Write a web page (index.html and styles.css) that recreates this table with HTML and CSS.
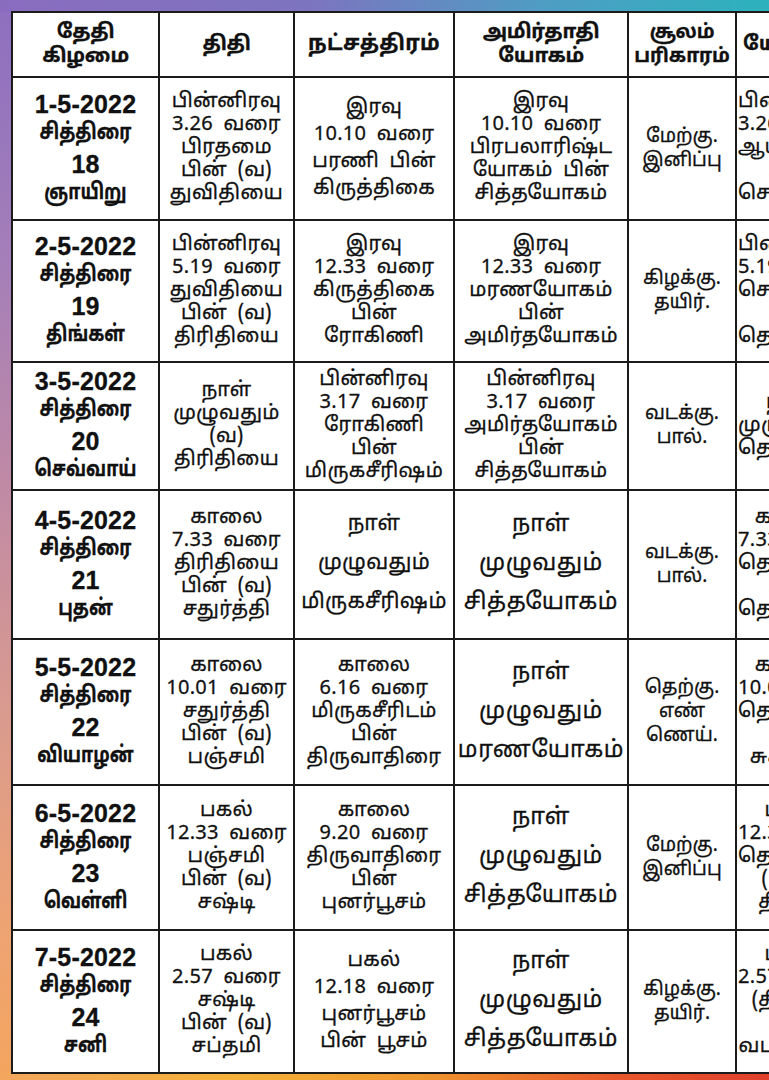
FILE: index.html
```html
<!DOCTYPE html>
<html lang="ta">
<head>
<meta charset="utf-8">
<title>பஞ்சாங்கம்</title>
<link rel="stylesheet" href="styles.css">
</head>
<body>
<div class="frame">
  <table class="cal">
    <colgroup>
      <col class="c1"><col class="c2"><col class="c3"><col class="c4"><col class="c5"><col class="c6">
    </colgroup>
    <thead>
      <tr class="rh">
        <th>தேதி<br>கிழமை</th>
        <th>திதி</th>
        <th class="wide">நட்சத்திரம்</th>
        <th>அமிர்தாதி<br>யோகம்</th>
        <th class="tight">சூலம்<br>பரிகாரம்</th>
        <th class="lead">யோகம்</th>
      </tr>
    </thead>
    <tbody>
      <tr class="r1">
        <td class="date"><span class="d">1-5-2022</span><span class="m">சித்திரை</span><span class="d">18</span><span class="m">ஞாயிறு</span></td>
        <td>பின்னிரவு<br>3.26 வரை<br>பிரதமை<br>பின் (வ)<br>துவிதியை</td>
        <td class="mid">இரவு<br>10.10 வரை<br>பரணி பின்<br>கிருத்திகை</td>
        <td>இரவு<br>10.10 வரை<br>பிரபலாரிஷ்ட<br>யோகம் பின்<br>சித்தயோகம்</td>
        <td class="small">மேற்கு.<br>இனிப்பு</td>
        <td>பின்னிரவு<br>3.26 வரை<br>ஆயுஷ்மான்<br>பின்<br>சௌபாக்கியம்</td>
      </tr>
      <tr class="r2">
        <td class="date"><span class="d">2-5-2022</span><span class="m">சித்திரை</span><span class="d">19</span><span class="m">திங்கள்</span></td>
        <td>பின்னிரவு<br>5.19 வரை<br>துவிதியை<br>பின் (வ)<br>திரிதியை</td>
        <td>இரவு<br>12.33 வரை<br>கிருத்திகை<br>பின்<br>ரோகிணி</td>
        <td>இரவு<br>12.33 வரை<br>மரணயோகம்<br>பின்<br>அமிர்தயோகம்</td>
        <td class="small">கிழக்கு.<br>தயிர்.</td>
        <td>பின்னிரவு<br>5.19 வரை<br>சௌபாக்கியம்<br>பின்<br>தெசோபனம்</td>
      </tr>
      <tr class="r3">
        <td class="date"><span class="d">3-5-2022</span><span class="m">சித்திரை</span><span class="d">20</span><span class="m">செவ்வாய்</span></td>
        <td>நாள்<br>முழுவதும்<br>(வ)<br>திரிதியை</td>
        <td>பின்னிரவு<br>3.17 வரை<br>ரோகிணி<br>பின்<br>மிருகசீரிஷம்</td>
        <td>பின்னிரவு<br>3.17 வரை<br>அமிர்தயோகம்<br>பின்<br>சித்தயோகம்</td>
        <td class="small">வடக்கு.<br>பால்.</td>
        <td>நாள்<br>முழுவதும்<br>தெசோபனம்</td>
      </tr>
      <tr class="r4">
        <td class="date"><span class="d">4-5-2022</span><span class="m">சித்திரை</span><span class="d">21</span><span class="m">புதன்</span></td>
        <td>காலை<br>7.33 வரை<br>திரிதியை<br>பின் (வ)<br>சதுர்த்தி</td>
        <td class="big">நாள்<br>முழுவதும்<br>மிருகசீரிஷம்</td>
        <td class="big big4">நாள்<br>முழுவதும்<br>சித்தயோகம்</td>
        <td class="small">வடக்கு.<br>பால்.</td>
        <td>காலை<br>7.33 வரை<br>தெசோபனம்<br>பின்<br>தெஅதிகண்டம்</td>
      </tr>
      <tr class="r5">
        <td class="date"><span class="d">5-5-2022</span><span class="m">சித்திரை</span><span class="d">22</span><span class="m">வியாழன்</span></td>
        <td>காலை<br>10.01 வரை<br>சதுர்த்தி<br>பின் (வ)<br>பஞ்சமி</td>
        <td>காலை<br>6.16 வரை<br>மிருகசீரிடம்<br>பின்<br>திருவாதிரை</td>
        <td class="big big4">நாள்<br>முழுவதும்<br>மரணயோகம்</td>
        <td class="small">தெற்கு.<br>எண்<br>ணெய்.</td>
        <td>காலை<br>10.01 வரை<br>தெஅதிகண்டம்<br>பின்<br>சுகர்மம்</td>
      </tr>
      <tr class="r6">
        <td class="date"><span class="d">6-5-2022</span><span class="m">சித்திரை</span><span class="d">23</span><span class="m">வெள்ளி</span></td>
        <td>பகல்<br>12.33 வரை<br>பஞ்சமி<br>பின் (வ)<br>சஷ்டி</td>
        <td>காலை<br>9.20 வரை<br>திருவாதிரை<br>பின்<br>புனர்பூசம்</td>
        <td class="big big4">நாள்<br>முழுவதும்<br>சித்தயோகம்</td>
        <td class="small">மேற்கு.<br>இனிப்பு</td>
        <td>பகல்<br>12.33 வரை<br>தெசுகர்மம்<br>(பின்)<br>திருதி</td>
      </tr>
      <tr class="r7">
        <td class="date"><span class="d">7-5-2022</span><span class="m">சித்திரை</span><span class="d">24</span><span class="m">சனி</span></td>
        <td>பகல்<br>2.57 வரை<br>சஷ்டி<br>பின் (வ)<br>சப்தமி</td>
        <td class="mid">பகல்<br>12.18 வரை<br>புனர்பூசம்<br>பின் பூசம்</td>
        <td class="big big4">நாள்<br>முழுவதும்<br>சித்தயோகம்</td>
        <td class="small">கிழக்கு.<br>தயிர்.</td>
        <td>பகல்<br>2.57 வரை<br>(திருதி)<br>பின்<br>வடமேற்கு</td>
      </tr>
    </tbody>
  </table>
</div>
</body>
</html>
```

FILE: styles.css
```css
html, body {
  margin: 0;
  padding: 0;
  overflow: hidden;
  width: 769px;
  height: 1080px;
}

body {
  font-family: "Noto Sans Tamil", "Lohit Tamil", "Liberation Sans", "Noto Sans", sans-serif;
  color: #111;
}

.frame {
  width: 769px;
  height: 1080px;
  box-sizing: border-box;
  padding: 11px 0 0 11px;
  overflow: hidden;
  background: linear-gradient(180deg, #8d6fc0 0%, #a57fb8 25%, #c08aa5 45%, #d89a90 65%, #eea374 85%, #f3a55e 100%);
  position: relative;
}

.frame::before {
  content: "";
  position: absolute;
  left: 0; right: 0; top: 0;
  height: 12px;
  background: linear-gradient(90deg, #8a6cbf 0%, #7d74bf 40%, #4f9cc4 70%, #2cb3bd 100%);
}

.frame::after {
  content: "";
  position: absolute;
  left: 0; right: 0; bottom: 0;
  height: 9px;
  background: linear-gradient(90deg, #f2a65e 0%, #f4b23a 30%, #f0962e 55%, #e9582c 80%, #e0402c 100%);
}

.cal {
  border-collapse: collapse;
  table-layout: fixed;
  width: 834px;
  background: #fff;
  position: relative;
  z-index: 1;
}

.c1 { width: 147px; }
.c2 { width: 135px; }
.c3 { width: 160px; }
.c4 { width: 174px; }
.c5 { width: 108px; }
.c6 { width: 110px; }

.cal th, .cal td {
  border: 2px solid #1b1b1b;
  text-align: center;
  vertical-align: middle;
  padding: 0 1px;
  overflow: hidden;
  white-space: nowrap;
}

.cal th {
  font-weight: 700;
  font-size: 20px;
  line-height: 24px;
  letter-spacing: -0.3px;
  -webkit-text-stroke: 0.3px #111;
}

.cal th.wide {
  font-size: 21px;
  letter-spacing: 0.3px;
}

.cal th.tight {
  font-size: 19px;
  letter-spacing: -0.2px;
}

.cal th.lead {
  text-align: left;
  padding-left: 6px;
}

.cal td {
  font-size: 20px;
  line-height: 23px;
  letter-spacing: 0.3px;
  word-spacing: 5px;
  -webkit-text-stroke: 0.3px #111;
}

.cal td.mid {
  line-height: 27px;
}

.cal td.date {
  letter-spacing: 0;
  word-spacing: 0;
  -webkit-text-stroke: 0.3px #111;
}

.date span {
  display: block;
  font-weight: 700;
}

.date .d {
  font-family: "Liberation Sans", sans-serif;
  font-size: 25px;
  line-height: 30px;
  letter-spacing: 0.2px;
}

.date .m {
  font-size: 22px;
  line-height: 30px;
  transform: scaleX(0.8);
}

.cal td.small {
  font-size: 19px;
  line-height: 24px;
  letter-spacing: 0;
  word-spacing: 0;
}

.cal td.big {
  font-size: 21px;
  line-height: 39px;
  letter-spacing: 0.3px;
}

.cal td.big4 {
  font-size: 23px;
  letter-spacing: 0.6px;
}

.rh { height: 65px; }
.r1 { height: 143px; }
.r2 { height: 142px; }
.r3 { height: 128px; }
.r4 { height: 149px; }
.r5 { height: 146px; }
.r6 { height: 145px; }
.r7 { height: 143px; }
```
